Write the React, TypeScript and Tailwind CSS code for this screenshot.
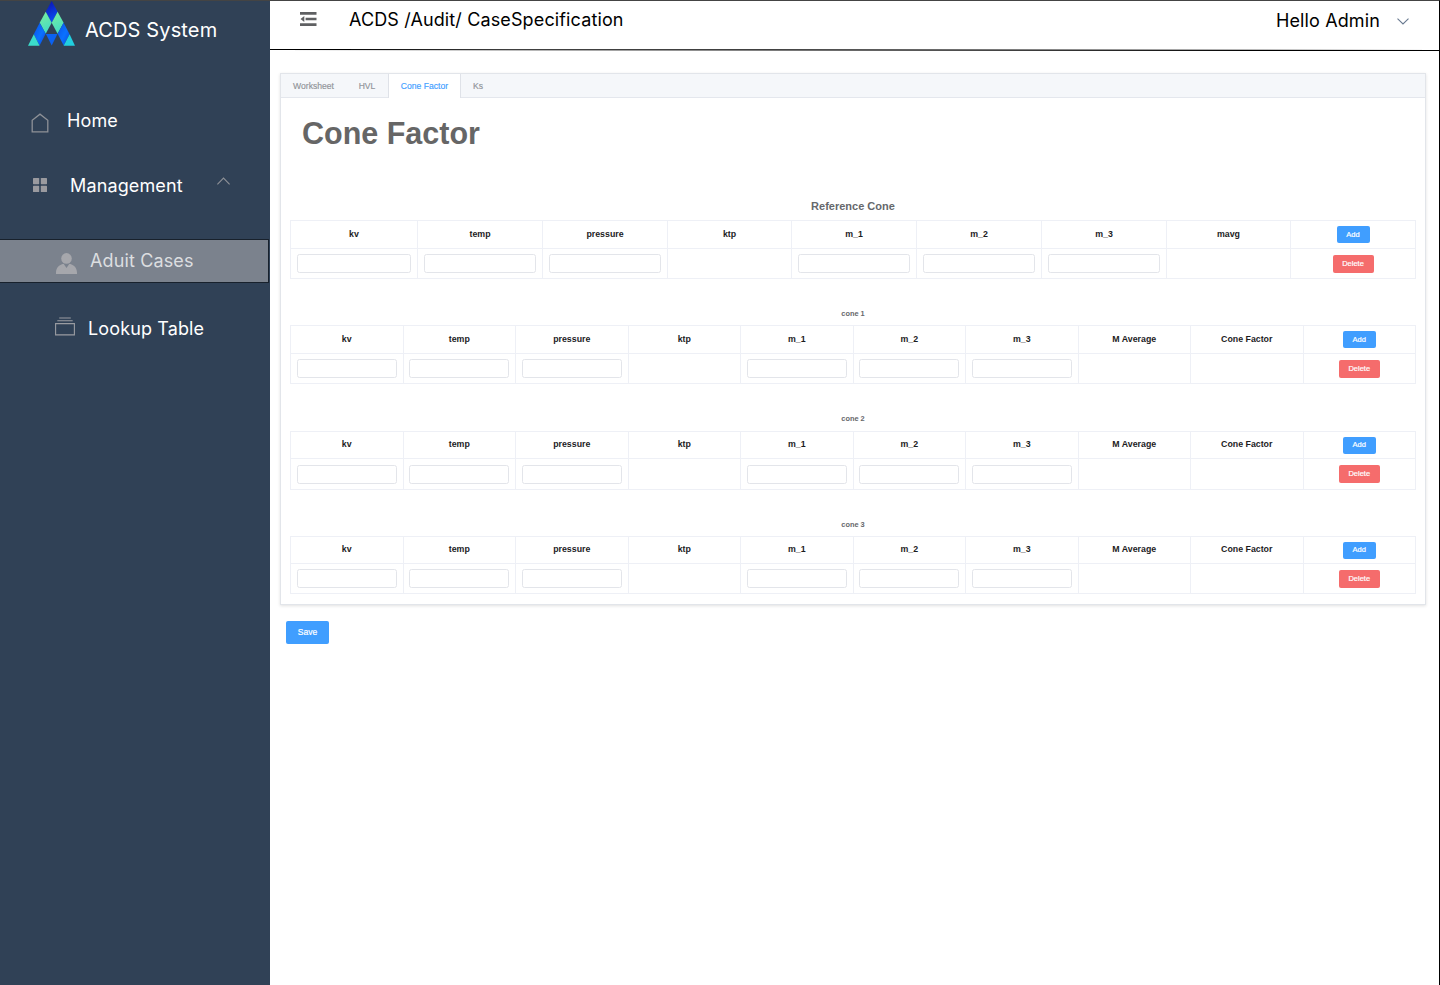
import React from "react";

const referenceHeads = ["kv", "temp", "pressure", "ktp", "m_1", "m_2", "m_3", "mavg"];
const coneHeads = ["kv", "temp", "pressure", "ktp", "m_1", "m_2", "m_3", "M Average", "Cone Factor"];
const editable = new Set(["kv", "temp", "pressure", "m_1", "m_2", "m_3"]);

function Logo() {
  return (
    <svg className="block h-[46px] w-12 shrink-0" viewBox="0 0 48 46" aria-label="ACDS">
      <defs>
        <linearGradient id="top" x1="0" y1="0" x2="0.3" y2="1">
          <stop offset="0" stopColor="#0c0fae" />
          <stop offset="1" stopColor="#0a4df0" />
        </linearGradient>
        <linearGradient id="green" x1="0" y1="0" x2="0.3" y2="1">
          <stop offset="0" stopColor="#7cf09c" />
          <stop offset="1" stopColor="#45dcc4" />
        </linearGradient>
        <linearGradient id="blue" x1="0" y1="0" x2="1" y2="1">
          <stop offset="0" stopColor="#0b50e6" />
          <stop offset="0.55" stopColor="#0a72ff" />
          <stop offset="1" stopColor="#0b45dd" />
        </linearGradient>
      </defs>
      <path d="M23.7 0 29.6 10.7 23.7 21.7 17.7 10.7Z" fill="url(#top)" />
      <path d="M17.7 10.7 23.7 21.7 17.7 32.7 11.7 21.7Z" fill="url(#green)" />
      <path d="M29.6 10.7 35.6 21.7 29.6 32.7 23.7 21.7Z" fill="url(#green)" />
      <path d="M11.7 21.7 17.7 32.7 11.6 44.5 5.8 33.2Z" fill="url(#blue)" />
      <path d="M35.6 21.7 41.6 33.2 35.7 44.5 29.6 32.7Z" fill="url(#blue)" />
      <path d="M17.9 33H29.4L23.7 44.5Z" fill="#0b62f2" />
      <path d="M5.8 33.2 11.6 44.7H0Z" fill="#3bdccb" />
      <path d="M41.6 33.2 47 44.7H35.6Z" fill="#22cfe0" />
    </svg>
  );
}

function Sidebar() {
  return (
    <aside className="flex w-[270px] shrink-0 flex-col bg-[#304156] text-white">
      <div className="flex h-[50px] items-start pl-7">
        <Logo />
        <span className="ml-[9px] mt-[13px] text-[20px] leading-8 tracking-[0.14px] whitespace-nowrap">ACDS System</span>
      </div>
      <nav className="flex flex-col text-[18px] tracking-[0.13px]">
        <a className="mt-[53px] flex h-8 items-center pl-[31px]">
          <svg className="mt-1.5 h-5 w-[18px]" viewBox="0 0 18 20" fill="none" stroke="#8e9197" strokeWidth="1.3">
            <path d="M1.2 18.8V7.3L9 1.2l7.8 6.1v11.5Z" />
          </svg>
          <span className="ml-[18px]">Home</span>
        </a>
        <a className="mt-[33px] flex h-8 items-center pl-[33px]">
          <svg className="h-[14px] w-[14px]" viewBox="0 0 14 14" fill="#9a9a9f">
            <rect width="6.2" height="6.2" rx="0.6" />
            <rect x="7.8" width="6.2" height="6.2" rx="0.6" />
            <rect y="7.8" width="6.2" height="6.2" rx="0.6" />
            <rect x="7.8" y="7.8" width="6.2" height="6.2" rx="0.6" />
          </svg>
          <span className="ml-[23px] w-[147px]">Management</span>
          <svg className="mb-[9px] h-2 w-[13px]" viewBox="0 0 13 8" fill="none" stroke="#8e9197" strokeWidth="1.1">
            <path d="M0.4 7.4 6.5 1.1l6.1 6.3" />
          </svg>
        </a>
        <a className="mt-[38px] flex h-11 w-[269px] items-center border border-l-0 border-[#18212c] bg-[#7b828d] pl-14 text-[#dcdee0]">
          <svg className="mt-[5px] h-[21px] w-[21px]" viewBox="0 0 21 21" fill="#a6a7ac">
            <circle cx="10.5" cy="5.4" r="5.3" />
            <path d="M0 21v-1.2C0 14.8 3 11.8 7.6 10.8L10.5 15l2.9-4.200C18 11.8 21 14.8 21 19.8V21Z" />
          </svg>
          <span className="mb-px ml-[13px]">Aduit Cases</span>
        </a>
        <a className="mt-[29px] flex h-8 items-center pl-[55px]">
          <svg className="mb-[3px] h-[19px] w-5" viewBox="0 0 20 19" fill="none" stroke="#9a9ca1" strokeWidth="1.1">
            <path d="M4.2 1h11.6M2.3 3.7h15.4M.6 6.6h18.8v11.3H.6Z" />
          </svg>
          <span className="ml-[13px]">Lookup Table</span>
        </a>
      </nav>
    </aside>
  );
}

function Header() {
  return (
    <header className="flex h-[50px] flex-col">
      <div className="flex h-9 shrink-0 items-center pl-[30px] pr-[30px] text-[18px] tracking-[0.13px] text-black">
        <svg className="h-[14px] w-[17px]" viewBox="0 0 17 14" fill="#5f6062">
          <path d="M0 0h16.5v2.7H0ZM5.6 5.7H16.5V8.3H5.6ZM0 11.300h16.5V14H0ZM0.5 7 4.300 4v6Z" />
        </svg>
        <span className="ml-8 grow">ACDS /Audit/ CaseSpecification</span>
        <span className="mt-0.5">Hello Admin</span>
        <svg className="ml-[17px] mt-1 h-[7px] w-3" viewBox="0 0 12 7" fill="none" stroke="#687990" strokeWidth="1.1">
          <path d="M0.5 0.7 6 6l5.5-5.300" />
        </svg>
      </div>
      <svg className="mt-3 block h-[3px] w-full shrink-0" viewBox="0 0 1169 3" preserveAspectRatio="none">
        <path d="M0 0.5 1169 1.5" stroke="#000" strokeWidth="1.1" />
      </svg>
    </header>
  );
}

function ConeTable({ heads, columns }: { heads: string[]; columns: string }) {
  return (
    <div className={`grid border-l border-t border-[#eef0f6] ${columns}`}>
      {heads.map((head) => (
        <div key={head} className="flex items-center justify-center border-b border-r border-[#eef0f6] text-[8.8px] font-bold text-[#1c1c1e]">
          {head}
        </div>
      ))}
      <div className="flex items-center justify-center border-b border-r border-[#eef0f6]">
        <button className="h-[17px] w-[33px] rounded-xs bg-[#409eff] text-[7.5px] leading-none font-normal text-white [-webkit-text-stroke:0.2px_white]">Add</button>
      </div>
      {heads.map((head) => (
        <div key={head} className="flex items-center border-b border-r border-[#eef0f6] pr-[6px] pl-[5.5px]">
          {editable.has(head) && (
            <input aria-label={head} className="h-[19px] w-full min-w-0 rounded-[2.5px] border border-[#e3e5ea] bg-white" />
          )}
        </div>
      ))}
      <div className="flex items-center justify-center border-b border-r border-[#eef0f6]">
        <button className="h-[18px] w-[41px] rounded-xs bg-[#f56c6c] text-[7.5px] leading-none font-normal text-white [-webkit-text-stroke:0.2px_white]">Delete</button>
      </div>
    </div>
  );
}

const coneColumns = "grid-cols-[repeat(10,minmax(0,1fr))]";

export default function App() {
  return (
    <div className="flex h-[985px] w-[1440px] overflow-hidden border-r border-t border-r-black border-t-[#444] bg-white font-['Inter',sans-serif]">
      <Sidebar />
      <main className="flex min-w-0 grow flex-col">
        <Header />
        <div className="flex flex-col pl-2.5 pr-[13px] pt-[22px] font-['Liberation_Sans',Arial,sans-serif]">
          <section className="flex h-[532px] flex-col border border-[#e2e5ea] bg-white shadow-[0_1px_3px_rgba(0,0,0,0.12)]">
            <div className="flex h-6 shrink-0 border-b border-[#e4e7ed] bg-[#f5f7fa] text-[8.6px] text-[#909399] [-webkit-text-stroke:0.15px_currentColor]">
              <span className="flex w-[65px] items-center justify-center pt-px">Worksheet</span>
              <span className="flex w-[42px] items-center justify-center pt-px">HVL</span>
              <span className="-mb-px flex w-[73px] items-center justify-center border-x border-[#dfe2e8] bg-white text-[#409eff]">Cone Factor</span>
              <span className="flex w-[34px] items-center justify-center pt-px">Ks</span>
            </div>
            <h1 className="mt-[15px] pl-[21px] text-[30.5px] leading-10 font-bold text-[#666]">Cone Factor</h1>
            <div className="flex flex-col pl-[9px] pr-[9px] pt-[45px] text-center font-bold text-[#66686c]">
              <h2 className="h-[22px] pt-px text-[11px] leading-[14px]">Reference Cone</h2>
              <ConeTable heads={referenceHeads} columns="grid-rows-[28px_30px] grid-cols-[127px_125px_125px_124px_125px_125px_125px_124px_125px]" />
              <h3 className="h-[46px] pt-[29px] text-[7.4px] leading-3">cone 1</h3>
              <ConeTable heads={coneHeads} columns={`grid-rows-[28px_30px] ${coneColumns}`} />
              <h3 className="h-[47px] pt-[29px] text-[7.4px] leading-3">cone 2</h3>
              <ConeTable heads={coneHeads} columns={`grid-rows-[27px_31px] ${coneColumns}`} />
              <h3 className="h-[46px] pt-[29px] text-[7.4px] leading-3">cone 3</h3>
              <ConeTable heads={coneHeads} columns={`grid-rows-[27px_30px] ${coneColumns}`} />
            </div>
          </section>
          <button className="ml-1.5 mt-4 h-[23px] w-[43px] rounded-xs bg-[#409eff] text-[8.5px] leading-none text-white [-webkit-text-stroke:0.2px_white]">Save</button>
        </div>
      </main>
    </div>
  );
}
